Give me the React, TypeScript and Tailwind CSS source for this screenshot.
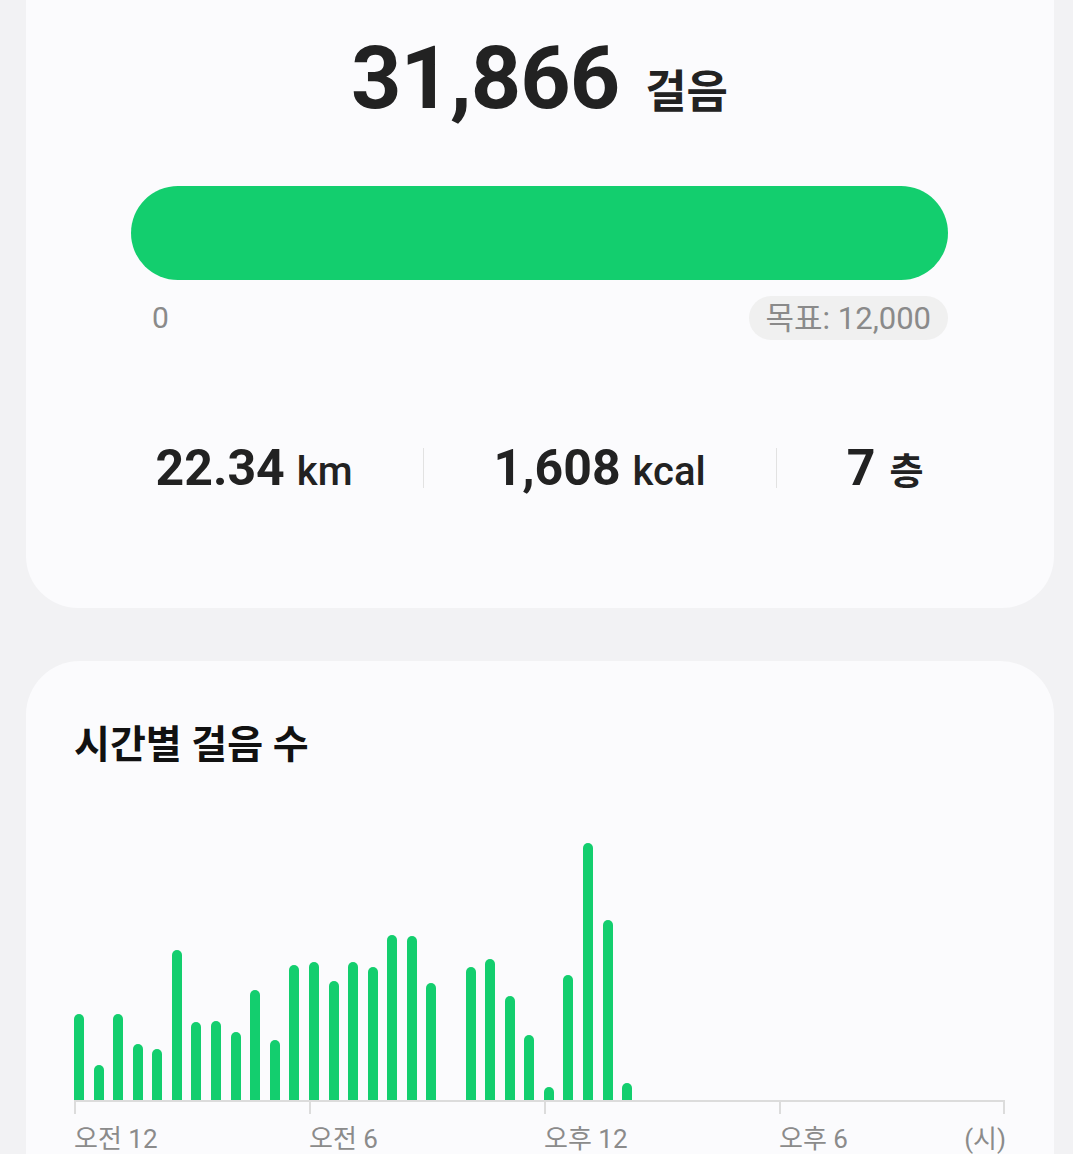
import React from "react";

const heights = [86, 35, 86, 56, 51, 150, 78, 79, 68, 110, 60, 135, 138, 119, 138, 133, 165, 164, 117, 0, 133, 141, 104, 65, 13, 125, 257, 180, 17];

export default function App() {
  const bars = Array.from({ length: 47 }, (_, i) => heights[i] ?? 0);
  return (
    <div
      className="h-[1154px] w-full overflow-hidden bg-[#f2f2f4]"
      style={{ fontFamily: "Roboto, 'Noto Sans CJK KR', sans-serif" }}
    >
      <div className="flex flex-col gap-[53px] pl-[26px] pr-[19px]">
        {/* Top card */}
        <div className="flex flex-col rounded-b-[52px] bg-[#fbfbfd] pb-[115px] pl-[105px] pr-[106px] pt-[34px]">
          <div className="flex items-baseline justify-center text-[#222222]">
            <span className="text-[88px] font-bold leading-none tracking-[-1px]">31,866</span>
            <span className="ml-[26px] text-[45px] font-bold leading-none">걸음</span>
          </div>
          <div className="mt-[64px] h-[94px] w-full rounded-full bg-[#13ce6e]" />
          <div className="mt-[16px] flex items-center justify-between">
            <span className="pl-[21px] text-[30px] leading-none text-[#8a8a8a]">0</span>
            <span className="flex h-[44px] items-center rounded-full bg-[#f0f0f0] px-[17px] text-[31px] leading-none text-[#8a8a8a]">
              목표: 12,000
            </span>
          </div>
          <div className="mt-[103px] flex items-center justify-center gap-[70px] text-[#222222]">
            <div className="flex items-baseline">
              <span className="text-[50px] font-bold leading-none">22.34</span>
              <span className="ml-[12px] text-[40px] font-medium leading-none">km</span>
            </div>
            <div className="h-[40px] w-px bg-[#e2e2e2]" />
            <div className="flex items-baseline">
              <span className="text-[50px] font-bold leading-none">1,608</span>
              <span className="ml-[12px] text-[40px] font-medium leading-none">kcal</span>
            </div>
            <div className="h-[40px] w-px bg-[#e2e2e2]" />
            <div className="flex items-baseline">
              <span className="text-[50px] font-bold leading-none">7</span>
              <span className="ml-[14px] text-[37px] font-bold leading-none">층</span>
            </div>
          </div>
        </div>

        {/* Hourly chart card */}
        <div className="flex h-[600px] flex-col rounded-t-[54px] bg-[#fbfbfd] pl-[48px] pt-[65px]">
          <h2 className="text-[39px] font-bold leading-none text-[#111111]">시간별 걸음 수</h2>
          <div className="mt-[78px] flex w-[930px] flex-col">
            <div className="flex h-[257px] items-end gap-[9.58px] overflow-hidden">
              {bars.map((h, i) => (
                <div
                  key={i}
                  className="w-[10px] shrink-0 rounded-t-full bg-[#13ce6e]"
                  style={{ height: h }}
                />
              ))}
            </div>
            <svg width="932" height="16" className="block" viewBox="0 0 932 16">
              <rect x="0" y="0" width="931" height="2" fill="#dcdcdc" />
              <rect x="0" y="0" width="2" height="14" fill="#dcdcdc" />
              <rect x="235" y="0" width="2" height="14" fill="#dcdcdc" />
              <rect x="470" y="0" width="2" height="14" fill="#dcdcdc" />
              <rect x="705" y="0" width="2" height="14" fill="#dcdcdc" />
              <rect x="929" y="0" width="2" height="14" fill="#dcdcdc" />
            </svg>
            <div className="mt-[10px] grid grid-cols-[235px_235px_235px_227px] text-[26px] leading-none text-[#8b8b8b]">
              <span>오전 12</span>
              <span>오전 6</span>
              <span>오후 12</span>
              <span className="flex justify-between">
                <span>오후 6</span>
                <span>(시)</span>
              </span>
            </div>
          </div>
        </div>
      </div>
    </div>
  );
}
